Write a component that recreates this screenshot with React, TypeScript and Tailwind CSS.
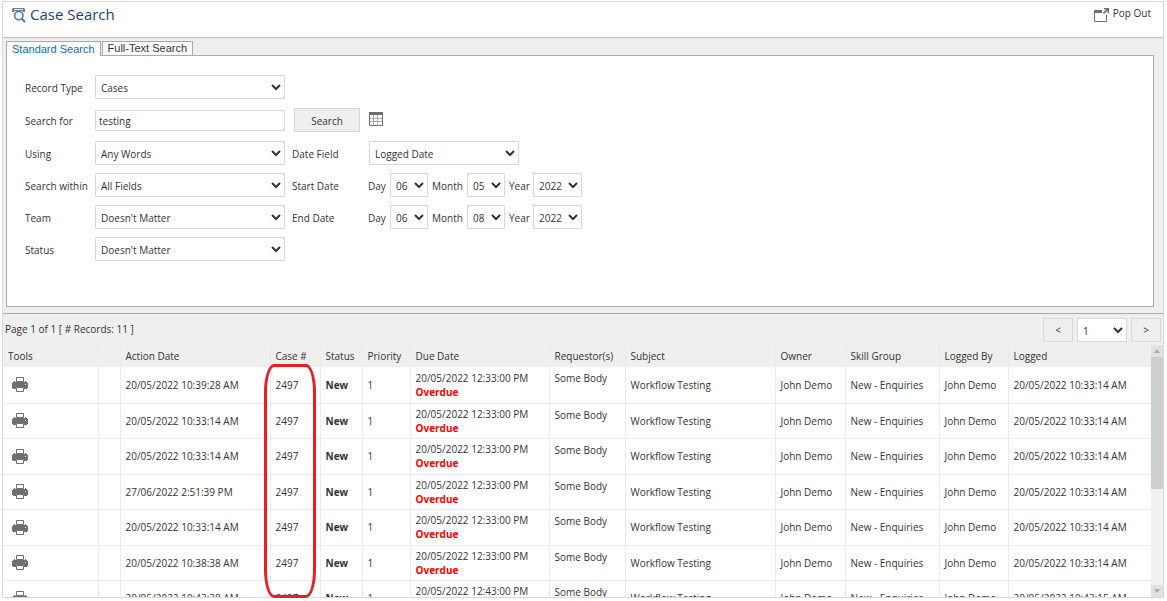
import React, { useState } from 'react';

const field = 'border border-[#d9d9d9] bg-white text-[#333] outline-none';

const PrinterIcon: React.FC = () => (
  <svg width="16" height="15" viewBox="0 0 16 15" className="ml-1" aria-hidden="true">
    <path d="M0 6h1V5h1V4h1v1h10V4h1v1h1v1h1v5h-1v1h-3v-2H4v2H1v-1H0z" fill="#6f6f6f" />
    <path d="M4.5 0.5h7v4h-7z" fill="#fff" stroke="#6f6f6f" />
    <path d="M4.5 10.5h7v4h-7z" fill="#fff" stroke="#6f6f6f" />
    <path d="M13 7h1v1h-1z" fill="#fff" />
  </svg>
);

const CaseSearchIcon: React.FC = () => (
  <svg width="14" height="15" viewBox="0 0 14 15" className="mt-[3px]" aria-hidden="true">
    <path d="M1 0h11l1 1v3h-2V3H2v1H0V1z" fill="#7a7a7a" />
    <path d="M2 1h9v1H2z" fill="#eee" />
    <circle cx="6.8" cy="7.6" r="4.2" fill="#f4f9fd" stroke="#4a82b8" strokeWidth="1.6" />
    <path d="M9.8 10.8l3.2 3.2" stroke="#4a82b8" strokeWidth="2.2" />
  </svg>
);

const PopOutIcon: React.FC = () => (
  <svg width="15" height="14" viewBox="0 0 15 14" className="mt-1" aria-hidden="true">
    <path d="M0 2h8v3H0z" fill="#6f6f6f" />
    <path d="M0.5 3v10.5h12V7" fill="none" stroke="#6f6f6f" />
    <path d="M10 0h5v5h-1.5V2.8L10 6 8.8 5l3.4-3.5H10z" fill="#6f6f6f" />
  </svg>
);

const CalendarIcon: React.FC = () => (
  <svg width="14" height="14" viewBox="0 0 14 14" aria-hidden="true">
    <path d="M4.5 3v10M8.5 3v10M1 6.5h12M1 9.5h12" stroke="#aaa" />
    <path d="M0.5 0.5h13v13h-13z" fill="none" stroke="#6f6f6f" />
    <path d="M0 0h14v3H0z" fill="#6f6f6f" />
  </svg>
);

interface SelectProps {
  id: string;
  options: string[];
  width: string;
  label?: string;
}

const Select: React.FC<SelectProps> = ({ id, options, width, label }) => (
  <select id={id} aria-label={label} className={`${field} h-6 px-px pt-0.5 ${width}`}>
    {options.map((option) => (
      <option key={option}>{option}</option>
    ))}
  </select>
);

const DateFields: React.FC<{ name: string; month: string }> = ({ name, month }) => (
  <div className="flex items-center gap-1">
    <label htmlFor={`${name}-day`} className="w-[18px] pt-0.5">Day</label>
    <Select id={`${name}-day`} options={['06']} width="w-[38px]" />
    <label htmlFor={`${name}-month`} className="w-[31px] pt-0.5">Month</label>
    <Select id={`${name}-month`} options={[month]} width="w-[38px]" />
    <label htmlFor={`${name}-year`} className="w-5 pt-0.5">Year</label>
    <Select id={`${name}-year`} options={['2022']} width="w-[49px]" />
  </div>
);

const Row: React.FC<{ id: string; label: string; children: React.ReactNode }> = ({ id, label, children }) => (
  <div className="flex h-6 items-center">
    <label htmlFor={id} className="w-[70px] pt-0.5 whitespace-nowrap">{label}</label>
    {children}
  </div>
);

const columns = [
  { name: 'Tools', width: 'w-[95px]' },
  { name: '', width: 'w-[22px]' },
  { name: 'Action Date', width: 'w-[150px]' },
  { name: 'Case #', width: 'w-[50px]' },
  { name: 'Status', width: 'w-[42px]' },
  { name: 'Priority', width: 'w-12' },
  { name: 'Due Date', width: 'w-[139px]' },
  { name: 'Requestor(s)', width: 'w-[76px]' },
  { name: 'Subject', width: 'w-[150px]' },
  { name: 'Owner', width: 'w-[70px]' },
  { name: 'Skill Group', width: 'w-[94px]' },
  { name: 'Logged By', width: 'w-[69px]' },
  { name: 'Logged', width: '' },
];

const cases = [
  { action: '20/05/2022 10:39:28 AM', due: '20/05/2022 12:33:00 PM', logged: '20/05/2022 10:33:14 AM' },
  { action: '20/05/2022 10:33:14 AM', due: '20/05/2022 12:33:00 PM', logged: '20/05/2022 10:33:14 AM' },
  { action: '20/05/2022 10:33:14 AM', due: '20/05/2022 12:33:00 PM', logged: '20/05/2022 10:33:14 AM' },
  { action: '27/06/2022 2:51:39 PM', due: '20/05/2022 12:33:00 PM', logged: '20/05/2022 10:33:14 AM' },
  { action: '20/05/2022 10:33:14 AM', due: '20/05/2022 12:33:00 PM', logged: '20/05/2022 10:33:14 AM' },
  { action: '20/05/2022 10:38:38 AM', due: '20/05/2022 12:33:00 PM', logged: '20/05/2022 10:33:14 AM' },
  { action: '20/05/2022 10:43:38 AM', due: '20/05/2022 12:43:00 PM', logged: '20/05/2022 10:43:15 AM' },
];

const ResultsTable: React.FC = () => (
  <table className="w-full table-fixed border-collapse text-left whitespace-nowrap">
    <thead>
      <tr className="h-[22px] bg-[#efefef]">
        {columns.map((column, index) => (
          <th key={index} className={`${column.width} border-r border-[#ebebeb] pl-[5px] font-normal last:border-r-0`}>
            {column.name}
          </th>
        ))}
      </tr>
    </thead>
    <tbody className="[&_td]:border-r [&_td]:border-b [&_td]:border-[#ebebeb] [&_td]:pl-[5px] [&_td:last-child]:border-r-0">
      {cases.map((item, index) => (
        <tr key={index} className="odd:h-9 even:h-[35px]">
          <td>
            <button aria-label="Print case" className="block"><PrinterIcon /></button>
          </td>
          <td></td>
          <td>{item.action}</td>
          <td>2497</td>
          <td className="font-bold">New</td>
          <td>1</td>
          <td>
            {item.due}
            <div className="font-bold text-[#f00]">Overdue</div>
          </td>
          <td className="pt-1 align-top">Some Body</td>
          <td>Workflow Testing</td>
          <td>John Demo</td>
          <td>New - Enquiries</td>
          <td>John Demo</td>
          <td>{item.logged}</td>
        </tr>
      ))}
    </tbody>
  </table>
);

const App: React.FC = () => {
  const [keywords, setKeywords] = useState('testing');

  return (
    <div className="flex h-screen flex-col bg-white pt-px pr-[3px] pb-[3px] pl-0.5 font-['Open_Sans',sans-serif] text-[10px] leading-[14px] text-[#333]">
      <main className="flex min-h-0 flex-1 flex-col border border-[#d9d9d9] bg-[#efefef]">
        <header className="flex h-9 shrink-0 items-start justify-between border-b border-[#bbb] bg-white pr-3 pl-[9px]">
          <h1 className="flex items-center gap-1 pt-px text-[15px] leading-[22px] text-[#1c3f7c]">
            <CaseSearchIcon />
            Case Search
          </h1>
          <a href="#popout" className="flex items-center gap-1 pt-0.5">
            <PopOutIcon />
            Pop Out
          </a>
        </header>

        <section className="shrink-0 border-b border-[#a9a9a9] pt-[3px] pr-[9px] pb-1.5 pl-[3px]">
          <div role="tablist" className="flex items-start gap-px font-['Liberation_Sans',sans-serif] text-[11px] leading-[13px]">
            <button role="tab" aria-selected="true" className="z-10 -mb-px h-[15px] border border-b-0 border-[#a9a9a9] bg-white px-[5px] pt-px text-[#0a6ebd]">
              Standard Search
            </button>
            <button role="tab" aria-selected="false" className="h-3.5 border border-b-0 border-[#a9a9a9] bg-white px-[5px]">
              Full-Text Search
            </button>
          </div>
          <form className="border border-[#a9a9a9] bg-white pt-[19px] pb-[45px] pl-[18px]" onSubmit={(e) => e.preventDefault()}>
            <div className="mb-[9px] flex flex-col gap-[9px]">
              <Row id="record-type" label="Record Type">
                <Select id="record-type" options={['Cases']} width="w-[190px]" />
              </Row>
              <Row id="search-for" label="Search for">
                <input
                  id="search-for"
                  type="text"
                  value={keywords}
                  onChange={(e) => setKeywords(e.target.value)}
                  className={`${field} h-[21px] w-[190px] px-[3px] pt-0.5`}
                />
                <button type="submit" className="mr-[9px] ml-[9px] h-6 w-[66px] border border-[#d9d9d9] bg-[#efefef] pt-0.5">
                  Search
                </button>
                <button type="button" aria-label="Calendar" className="pb-0.5"><CalendarIcon /></button>
              </Row>
            </div>
            <div className="flex flex-col gap-2">
              <Row id="using" label="Using">
                <Select id="using" options={['Any Words']} width="w-[190px]" />
                <label htmlFor="date-field" className="ml-[7px] w-[77px] pt-0.5">Date Field</label>
                <Select id="date-field" options={['Logged Date']} width="w-[150px]" />
              </Row>
              <Row id="within" label="Search within">
                <Select id="within" options={['All Fields']} width="w-[190px]" />
                <span className="ml-[7px] w-[76px] pt-0.5">Start Date</span>
                <DateFields name="start" month="05" />
              </Row>
              <Row id="team" label="Team">
                <Select id="team" options={["Doesn't Matter"]} width="w-[190px]" />
                <span className="ml-[7px] w-[76px] pt-0.5">End Date</span>
                <DateFields name="end" month="08" />
              </Row>
              <Row id="status" label="Status">
                <Select id="status" options={["Doesn't Matter"]} width="w-[190px]" />
              </Row>
            </div>
          </form>
        </section>

        <section className="flex min-h-0 flex-1 flex-col">
          <div className="flex h-[31px] shrink-0 items-center justify-between pr-0.5 pl-0.5">
            <span className="pb-0.5">Page 1 of 1 [ # Records: 11 ]</span>
            <div className="flex gap-1">
              <button aria-label="Previous page" className="h-6 w-[30px] border border-[#d9d9d9]">&lt;</button>
              <Select id="page" label="Page" options={['1']} width="w-[50px]" />
              <button aria-label="Next page" className="h-6 w-[30px] border border-[#d9d9d9]">&gt;</button>
            </div>
          </div>
          <div className="relative flex min-h-0 flex-1">
            <div className="min-w-0 flex-1 overflow-hidden bg-white">
              <ResultsTable />
            </div>
            <div className="flex w-3 shrink-0 flex-col bg-[#f1f1f1]">
              <div className="flex h-3 items-center justify-center bg-[#e1e1e1]">
                <svg width="6" height="4" viewBox="0 0 6 4"><path d="M3 0l3 4H0z" fill="#a9a9a9" /></svg>
              </div>
              <div className="h-[132px] bg-[#cdced2]" />
              <div className="mt-auto flex h-3 items-center justify-center bg-[#e1e1e1]">
                <svg width="6" height="4" viewBox="0 0 6 4"><path d="M0 0h6L3 4z" fill="#a9a9a9" /></svg>
              </div>
            </div>
            <div className="pointer-events-none absolute top-[19px] -bottom-px left-[261px] w-[52px] rounded-[10px/28px] border-[3px] border-[#ed1c24]" />
          </div>
        </section>
      </main>
    </div>
  );
};

export default App;
